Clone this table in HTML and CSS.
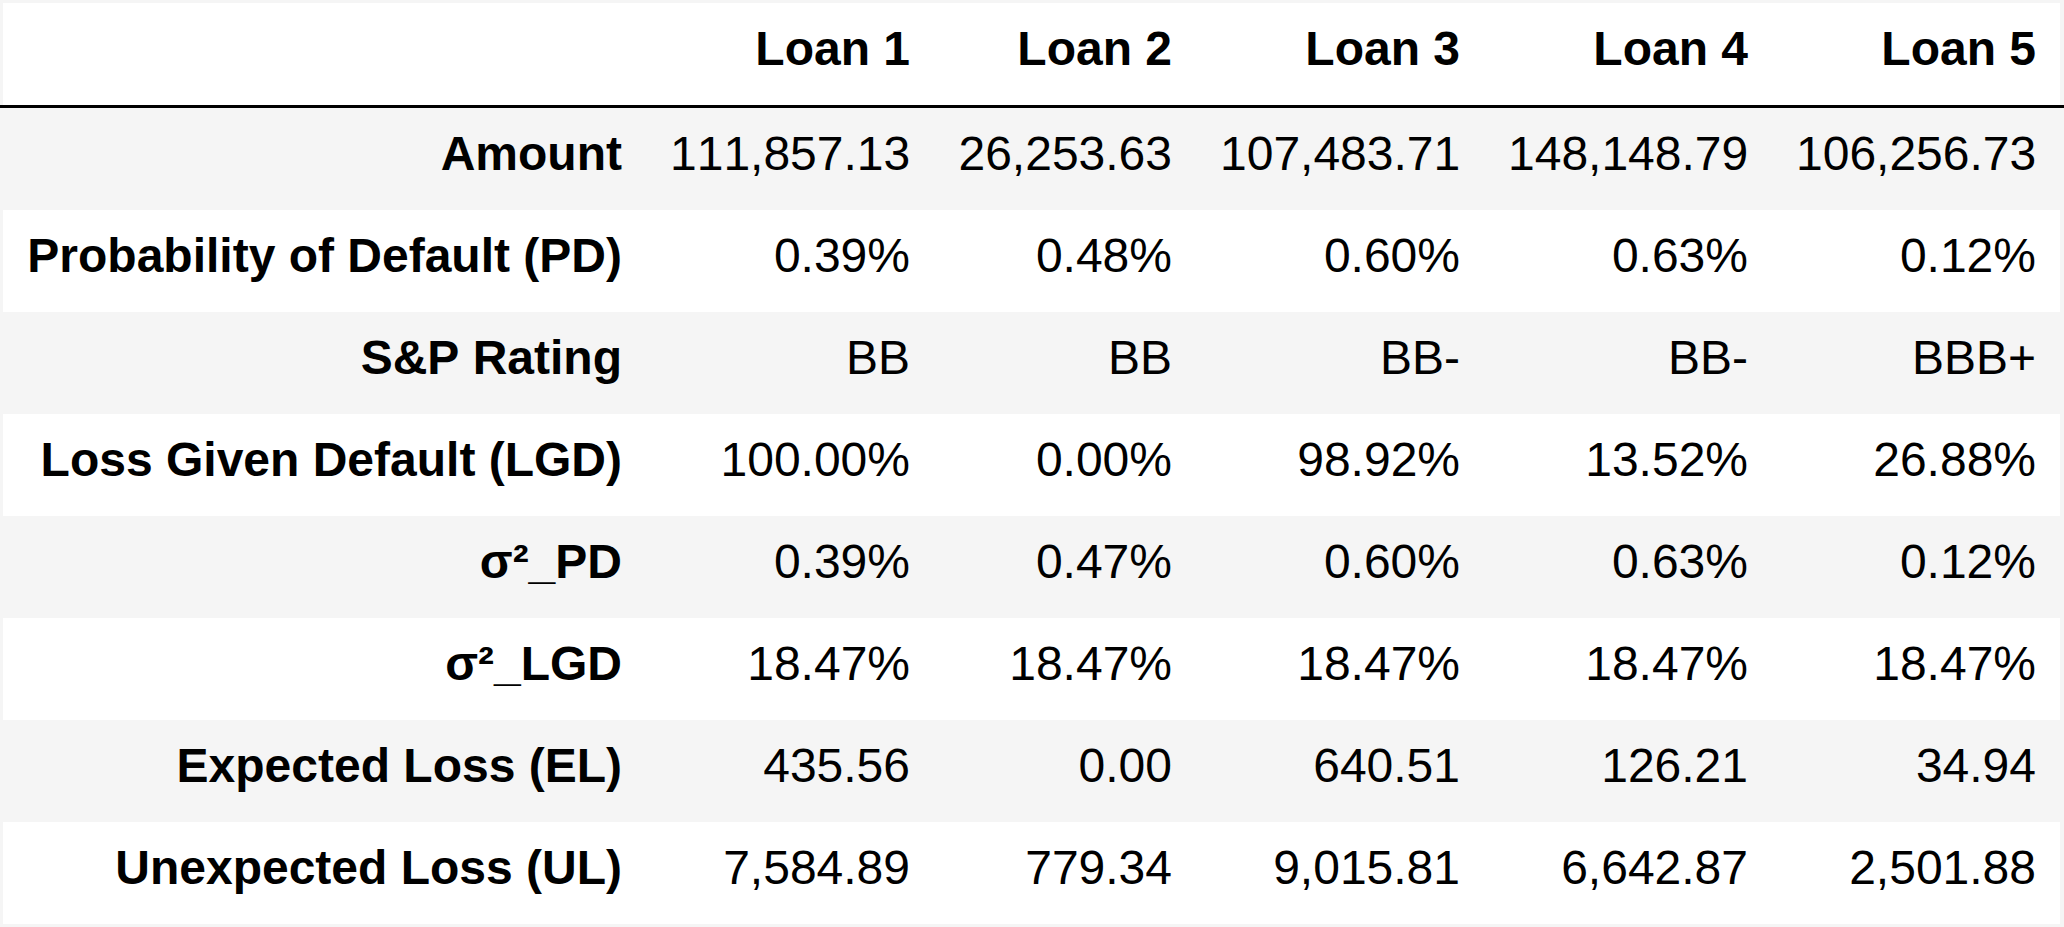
FILE: index.html
```html
<!DOCTYPE html>
<html>
<head>
<meta charset="utf-8">
<link rel="stylesheet" href="styles.css">
</head>
<body>
<table class="df">
  <thead>
    <tr><th class="c0"></th><th class="c1">Loan 1</th><th class="c2">Loan 2</th><th class="c3">Loan 3</th><th class="c4">Loan 4</th><th class="c5">Loan 5</th></tr>
  </thead>
  <tbody>
    <tr><th>Amount</th><td>111,857.13</td><td>26,253.63</td><td>107,483.71</td><td>148,148.79</td><td>106,256.73</td></tr>
    <tr><th>Probability of Default (PD)</th><td>0.39%</td><td>0.48%</td><td>0.60%</td><td>0.63%</td><td>0.12%</td></tr>
    <tr><th>S&amp;P Rating</th><td>BB</td><td>BB</td><td>BB-</td><td>BB-</td><td>BBB+</td></tr>
    <tr><th>Loss Given Default (LGD)</th><td>100.00%</td><td>0.00%</td><td>98.92%</td><td>13.52%</td><td>26.88%</td></tr>
    <tr><th>σ²_PD</th><td>0.39%</td><td>0.47%</td><td>0.60%</td><td>0.63%</td><td>0.12%</td></tr>
    <tr><th>σ²_LGD</th><td>18.47%</td><td>18.47%</td><td>18.47%</td><td>18.47%</td><td>18.47%</td></tr>
    <tr><th>Expected Loss (EL)</th><td>435.56</td><td>0.00</td><td>640.51</td><td>126.21</td><td>34.94</td></tr>
    <tr><th>Unexpected Loss (UL)</th><td>7,584.89</td><td>779.34</td><td>9,015.81</td><td>6,642.87</td><td>2,501.88</td></tr>
  </tbody>
</table>
</body>
</html>
```

FILE: styles.css
```css
html, body {
  margin: 0;
  background: #f5f5f5;
}
body {
  padding-top: 3px;
  font-family: "Liberation Sans", Arial, sans-serif;
  font-kerning: none;
}
.df {
  width: 2064px;
  table-layout: fixed;
  border-collapse: separate;
  border-spacing: 0;
  font-size: 48px;
  line-height: 54px;
  color: #000;
  font-kerning: none;
}
.df th,
.df td {
  box-sizing: border-box;
  padding: 19px 24px 29px;
  text-align: right;
  white-space: nowrap;
  background: #fff;
  vertical-align: middle;
}
.df th {
  font-weight: bold;
}
.df td {
  font-weight: normal;
}
.df .c0 { width: 646px; }
.df .c1 { width: 288px; }
.df .c2 { width: 262px; }
.df .c3 { width: 288px; }
.df .c4 { width: 288px; }
.df .c5 { width: 292px; }
.df thead th {
  border-bottom: 3px solid #000;
}
.df tbody tr:nth-child(odd) th,
.df tbody tr:nth-child(odd) td {
  background: #f5f5f5;
}
.df tr > :first-child {
  padding-left: 27px;
  box-shadow: inset 3px 0 0 #f5f5f5;
}
.df tr > :last-child {
  padding-right: 28px;
  box-shadow: inset -4px 0 0 #f5f5f5;
}
```
